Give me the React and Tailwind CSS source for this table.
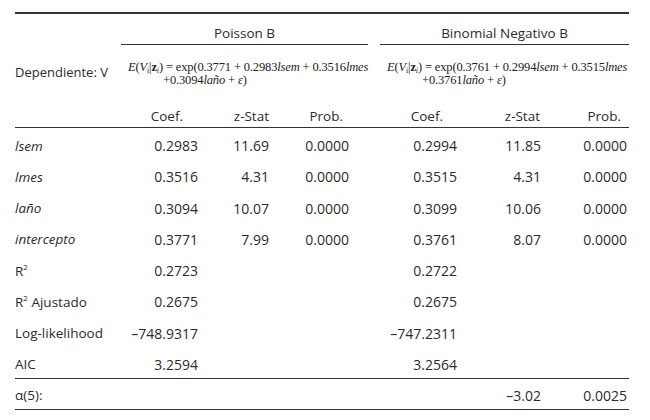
const rows = [
  { label: 'lsem', it: true, p: ['0.2983', '11.69', '0.0000'], b: ['0.2994', '11.85', '0.0000'] },
  { label: 'lmes', it: true, p: ['0.3516', '4.31', '0.0000'], b: ['0.3515', '4.31', '0.0000'] },
  { label: 'laño', it: true, p: ['0.3094', '10.07', '0.0000'], b: ['0.3099', '10.06', '0.0000'] },
  { label: 'intercepto', it: true, p: ['0.3771', '7.99', '0.0000'], b: ['0.3761', '8.07', '0.0000'] },
  { label: 'R2', p: ['0.2723', '', ''], b: ['0.2722', '', ''] },
  { label: 'R2adj', p: ['0.2675', '', ''], b: ['0.2675', '', ''] },
  { label: 'Log-likelihood', p: ['–748.9317', '', ''], b: ['–747.2311', '', ''] },
  { label: 'AIC', p: ['3.2594', '', ''], b: ['3.2564', '', ''] },
];

const cols = 'grid grid-cols-[106px_77px_71px_80px_28px_80px_84px_88px]';

function Label({ r }) {
  if (r.label === 'R2') return <span>R<sup className="text-[8px] -top-[6px]">2</sup></span>;
  if (r.label === 'R2adj') return <span>R<sup className="text-[8px] -top-[6px]">2</sup> Ajustado</span>;
  return <span className={r.it ? 'italic' : ''}>{r.label}</span>;
}

function Formula({ a, b, c, d }) {
  return (
    <div className="font-['Liberation_Serif',serif] text-[12.5px] leading-[13px] tracking-[-0.15px] text-[#222] whitespace-nowrap">
      <div>
        <i>E</i>(<i>V</i><sub className="text-[8px]">i</sub>|<b>z</b><sub className="text-[8px]"><i>i</i></sub>) = exp({a} + {b}<i>lsem</i> + {c}<i>lmes</i>
      </div>
      <div className="pl-[35px]">
        +{d}<i>laño</i> + <i>ε</i>)
      </div>
    </div>
  );
}

export default function App() {
  return (
    <div className="w-[650px] h-[420px] bg-white pt-[12px] pl-[15px] font-['Open_Sans',sans-serif] text-[13.5px] text-[#2b2b2b]">
      <div className="w-[614px]">
        <div className="border-t-2 border-[#333]" />
        <div className={`${cols} h-[31px]`}>
          <div />
          <div className="col-span-4 mr-[9px] border-b border-[#333] flex items-end justify-center pb-[1px]">Poisson B</div>
          <div className="col-span-3 ml-[3px] border-b border-[#333] flex items-end justify-center pb-[1px]">Binomial Negativo B</div>
        </div>
        <div className={`${cols} h-[49px] items-center`}>
          <div className="whitespace-nowrap pt-[6px] text-[13px]">Dependiente: V</div>
          <div className="col-span-4 pl-[7px] pt-[9px]">
            <Formula a="0.3771" b="0.2983" c="0.3516" d="0.3094" />
          </div>
          <div className="col-span-3 pl-[10px] pt-[9px]">
            <Formula a="0.3761" b="0.2994" c="0.3515" d="0.3761" />
          </div>
        </div>
        <div className={`${cols} h-[34px] items-end pb-[1px] border-b-[1.5px] border-[#333]`}>
          <div />
          <div className="text-right pr-[15px]">Coef.</div>
          <div className="text-right">z-Stat</div>
          <div className="text-right pr-[6px]">Prob.</div>
          <div />
          <div className="text-right pr-[14px]">Coef.</div>
          <div className="text-right pr-[1px]">z-Stat</div>
          <div className="text-right pr-[8px]">Prob.</div>
        </div>
        {rows.map((r) => (
          <div key={r.label} className={`${cols} h-[31.25px] items-center pt-[4px]`}>
            <div className="whitespace-nowrap"><Label r={r} /></div>
            {r.p.map((v, i) => (
              <div key={'p' + i} className="text-right text-[14px]">{v}</div>
            ))}
            <div />
            {r.b.map((v, i) => (
              <div key={'b' + i} className={i === 2 ? 'text-right text-[14px] pr-[2px]' : 'text-right text-[14px]'}>{v}</div>
            ))}
          </div>
        ))}
        <div className={`${cols} h-[32px] items-center pt-[2px] border-t-[1.5px] border-b-[1.5px] border-[#333]`}>
          <div>α(5):</div>
          <div />
          <div />
          <div />
          <div />
          <div />
          <div className="text-right text-[14px]">–3.02</div>
          <div className="text-right text-[14px] pr-[2px]">0.0025</div>
        </div>
      </div>
    </div>
  );
}
